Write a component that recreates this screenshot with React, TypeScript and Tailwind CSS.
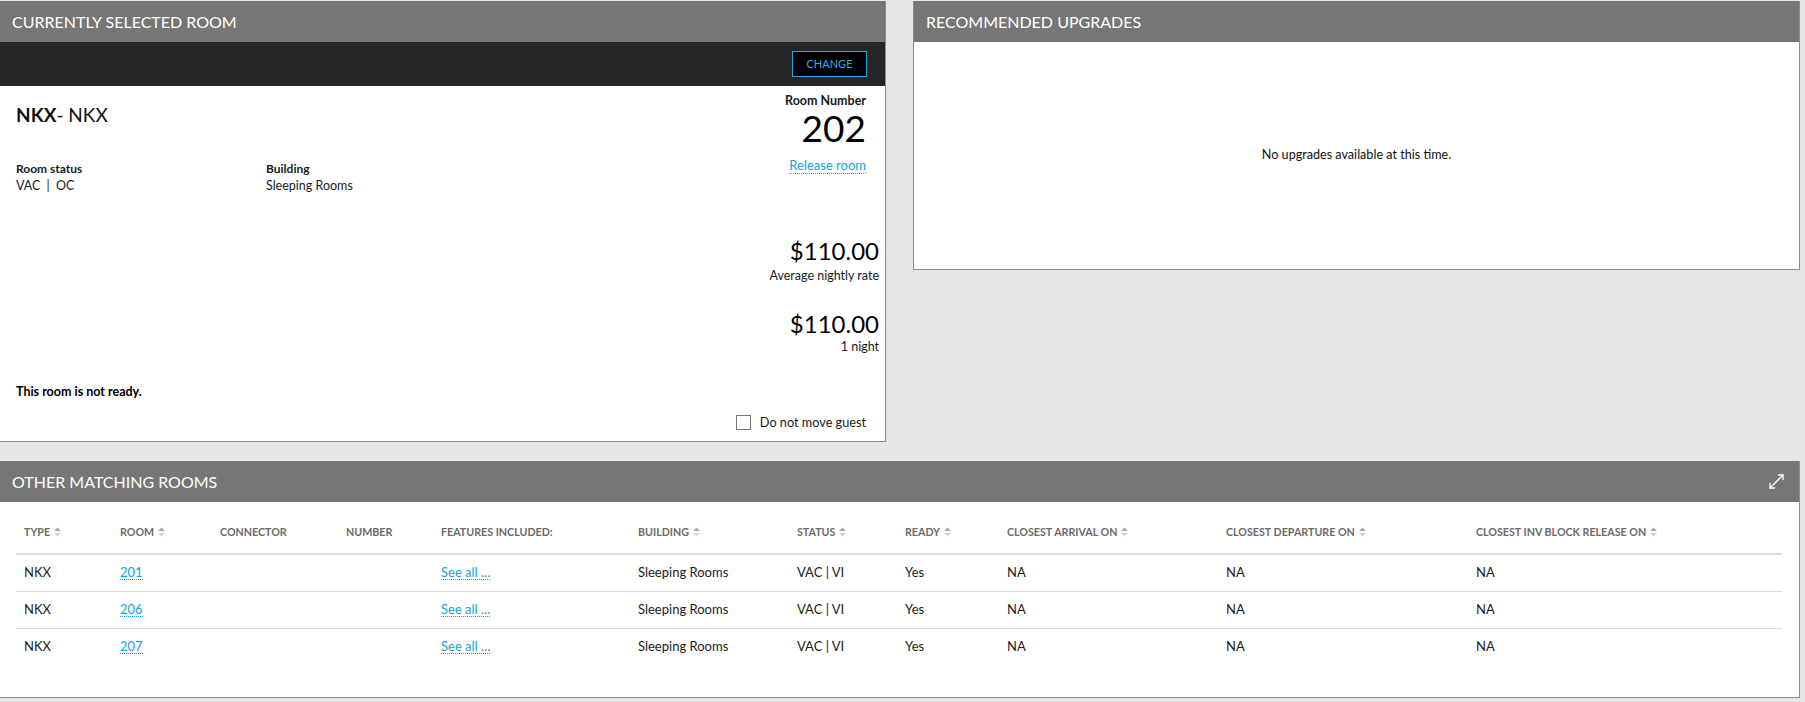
import React from 'react';

const SortIcon = () => (
  <svg width="7" height="10" viewBox="0 0 7 10" className="ml-[4px] inline-block align-[-1px]">
    <path d="M3.5 0.5 7 4H0z" fill="#a8a8a8" />
    <path d="M0 6h7L3.5 9.5z" fill="#d4d4d4" />
  </svg>
);

const ExpandIcon = () => (
  <svg width="17" height="17" viewBox="0 0 17 17" fill="none" stroke="white" strokeWidth="1.3" strokeLinecap="round" strokeLinejoin="round">
    <path d="M2 15 15 2" />
    <path d="M10.5 2H15v4.5" />
    <path d="M2 10.5V15h4.5" />
  </svg>
);

const rows = [{ room: '201' }, { room: '206' }, { room: '207' }];

const columns = [
  { label: 'Type', w: 96, sort: true },
  { label: 'Room', w: 100, sort: true },
  { label: 'Connector', w: 126 },
  { label: 'Number', w: 95 },
  { label: 'Features Included:', w: 197 },
  { label: 'Building', w: 159, sort: true },
  { label: 'Status', w: 108, sort: true },
  { label: 'Ready', w: 102, sort: true },
  { label: 'Closest Arrival On', w: 219, sort: true },
  { label: 'Closest Departure On', w: 250, sort: true },
  { label: 'Closest Inv Block Release On', w: 314, sort: true },
];

const PanelHeader = ({ title, children }: { title: string; children?: React.ReactNode }) => (
  <div className="flex h-[41px] items-center justify-between bg-[#767676] pl-3 pr-[14px] text-[16px] text-white">
    <span>{title}</span>
    {children}
  </div>
);

const LinkText = ({ children }: { children: React.ReactNode }) => (
  <span className="inline-block border-b border-dotted border-[#1a9fd6] leading-[14px] text-[#1a9fd6]">{children}</span>
);

export default function App() {
  return (
    <div className="min-h-screen bg-[#e6e6e6] pt-px pr-[5px] font-['Lato','Open_Sans',sans-serif] text-[#1a1a1a]">
      <div className="flex items-start gap-[27px]">
        {/* currently selected room */}
        <div className="w-[886px] border-r border-b border-[#8c8c8c] bg-white">
          <PanelHeader title="CURRENTLY SELECTED ROOM" />
          <div className="flex h-[44px] items-center justify-end bg-[#262626] pr-[18px]">
            <button className="h-[26px] w-[75px] border border-[#1aa8e0] bg-black text-[11px] text-[#27b2e8]">CHANGE</button>
          </div>
          <div className="flex h-[355px] flex-col px-4">
            <div className="flex justify-between">
              <div className="pt-[17px]">
                <div className="text-[19px] leading-[23px] text-[#111]">
                  <span className="font-bold">NKX</span>- NKX
                </div>
                <div className="mt-[34px] flex text-[12.5px] leading-[17px]">
                  <div className="w-[250px]">
                    <div className="text-[12px] font-bold">Room status</div>
                    <div>
                      VAC <span className="mx-[3px]">|</span> OC
                    </div>
                  </div>
                  <div>
                    <div className="text-[12px] font-bold">Building</div>
                    <div>Sleeping Rooms</div>
                  </div>
                </div>
              </div>
              <div className="flex flex-col items-end pt-[7px] pr-[3px]">
                <div className="text-[12.5px] font-bold leading-[16px]">Room Number</div>
                <div className="text-[37px] leading-[38px] text-black">202</div>
                <div className="mt-[10px] border-b border-dotted border-[#1a9fd6] text-[13px] leading-[16px] text-[#1a9fd6]">Release room</div>
                <div className="mr-[-13px] mt-[63px] flex flex-col items-end">
                  <div className="text-[24px] leading-[28px] text-black">$110.00</div>
                  <div className="mt-[3px] text-[12.5px] leading-[16px]">Average nightly rate</div>
                  <div className="mt-[26px] text-[24px] leading-[28px] text-black">$110.00</div>
                  <div className="mt-px text-[12.5px] leading-[16px]">1 night</div>
                </div>
              </div>
            </div>
            <div className="mt-auto text-[12.5px] font-bold leading-[16px] text-black">This room is not ready.</div>
            <div className="mt-[14px] mb-[10px] flex h-[17px] items-center justify-end pr-[3px]">
              <span className="h-[15px] w-[15px] border border-[#777] bg-white" />
              <span className="ml-[9px] text-[12.7px]">Do not move guest</span>
            </div>
          </div>
        </div>

        {/* recommended upgrades */}
        <div className="flex-1 border-x border-b border-[#8c8c8c] bg-white">
          <PanelHeader title="RECOMMENDED UPGRADES" />
          <div className="flex h-[227px] items-center justify-center text-[12.6px] text-[#111]">
            No upgrades available at this time.
          </div>
        </div>
      </div>

      {/* other matching rooms */}
      <div className="mt-[19px] border-r border-b border-[#8c8c8c] bg-white">
        <PanelHeader title="OTHER MATCHING ROOMS">
          <ExpandIcon />
        </PanelHeader>
        <div className="h-[195px] pl-4">
          <table className="w-[1766px] table-fixed border-collapse text-left">
            <colgroup>
              {columns.map((c) => (
                <col key={c.label} style={{ width: c.w }} />
              ))}
            </colgroup>
            <thead>
              <tr className="border-b-2 border-[#dcdcdc]">
                {columns.map((c) => (
                  <th
                    key={c.label}
                    className="pt-[23px] pb-[14px] pl-2 text-[10.7px] font-bold uppercase leading-[14px] whitespace-nowrap text-[#6a6a6a]"
                  >
                    {c.label}
                    {c.sort && <SortIcon />}
                  </th>
                ))}
              </tr>
            </thead>
            <tbody className="text-[13px] text-[#1a1a1a]">
              {rows.map((r, i) => (
                <tr key={r.room} className={i < rows.length - 1 ? 'border-b border-[#dcdcdc]' : ''}>
                  <td className="h-[37px] pl-2">NKX</td>
                  <td className="pl-2">
                    <LinkText>{r.room}</LinkText>
                  </td>
                  <td className="pl-2" />
                  <td className="pl-2" />
                  <td className="pl-2">
                    <LinkText>See all ...</LinkText>
                  </td>
                  <td className="pl-2">Sleeping Rooms</td>
                  <td className="pl-2">VAC | VI</td>
                  <td className="pl-2">Yes</td>
                  <td className="pl-2">NA</td>
                  <td className="pl-2">NA</td>
                  <td className="pl-2">NA</td>
                </tr>
              ))}
            </tbody>
          </table>
        </div>
      </div>
    </div>
  );
}
